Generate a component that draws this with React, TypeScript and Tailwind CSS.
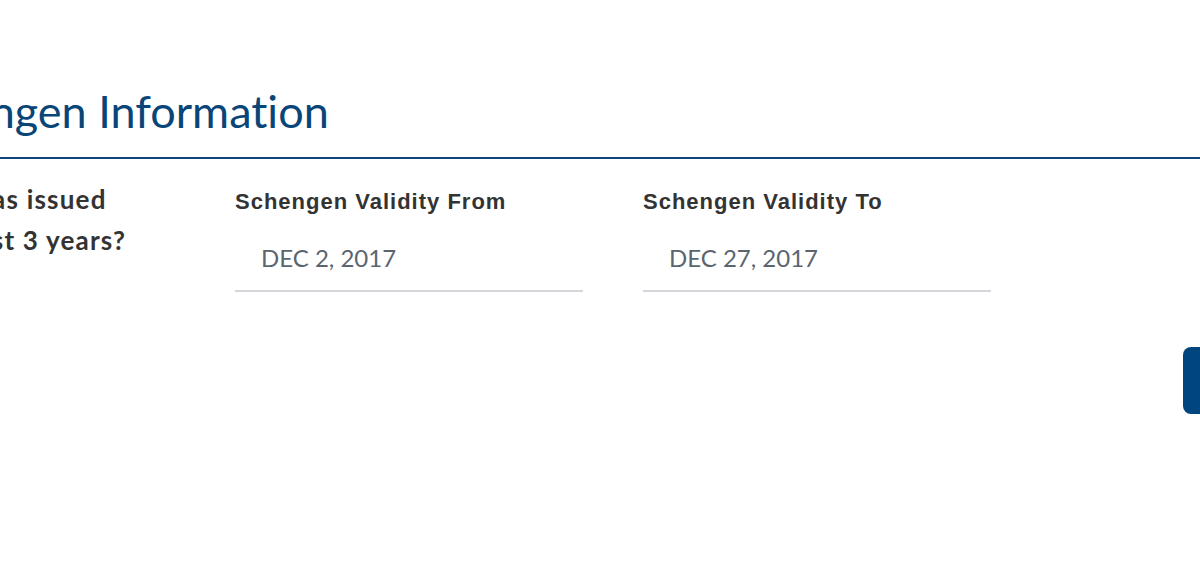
import { FC } from "react";

const sourceLike = { fontFamily: "Lato, 'Noto Sans', sans-serif" };
const arialLike = { fontFamily: "'Liberation Sans', Arial, sans-serif" };

const DateField: FC<{ label: string; value: string }> = ({ label, value }) => {
    return (
        <div className="w-[348px]">
            <div className="text-[22px] leading-[26px] font-bold tracking-[1px] text-[#333333]" style={arialLike}>{label}</div>
            <div className="mt-[28px] pl-[26px] pb-[17px] border-b-2 border-[#d3d6da] text-[24px] leading-[30px] text-[#5b6570]" style={sourceLike}>
                {value}
            </div>
        </div>
    );
};

const App: FC = () => {
    return (
        <div className="w-[1200px] h-[583px] overflow-hidden bg-white">
            <div className="pt-[83px]">
                <h2 className="-ml-[105px] whitespace-nowrap text-[45px] leading-[56px] text-[#0a4578] [font-variant-ligatures:none]" style={sourceLike}>
                    Schengen Information
                </h2>
                <div className="mt-[18px] h-[2px] bg-[#0d467b]" />
            </div>
            <div className="flex mt-[30px]">
                <div className="-ml-[263px] w-[438px] mr-[60px] text-[26px] leading-[41px] font-bold tracking-[1.2px] text-[#333333] whitespace-nowrap" style={sourceLike}>
                    <div className="-mt-[10px]">If a Schengen visa was issued</div>
                    <div>to you within the past 3 years?</div>
                </div>
                <div className="flex gap-[60px]">
                    <DateField label="Schengen Validity From" value="DEC 2, 2017" />
                    <DateField label="Schengen Validity To" value="DEC 27, 2017" />
                </div>
            </div>
            <div className="flex justify-end mt-[55px] -mr-[100px]">
                <button className="w-[117px] h-[67px] rounded-[8px] bg-[#00457d]" />
            </div>
        </div>
    );
};

export default App;
